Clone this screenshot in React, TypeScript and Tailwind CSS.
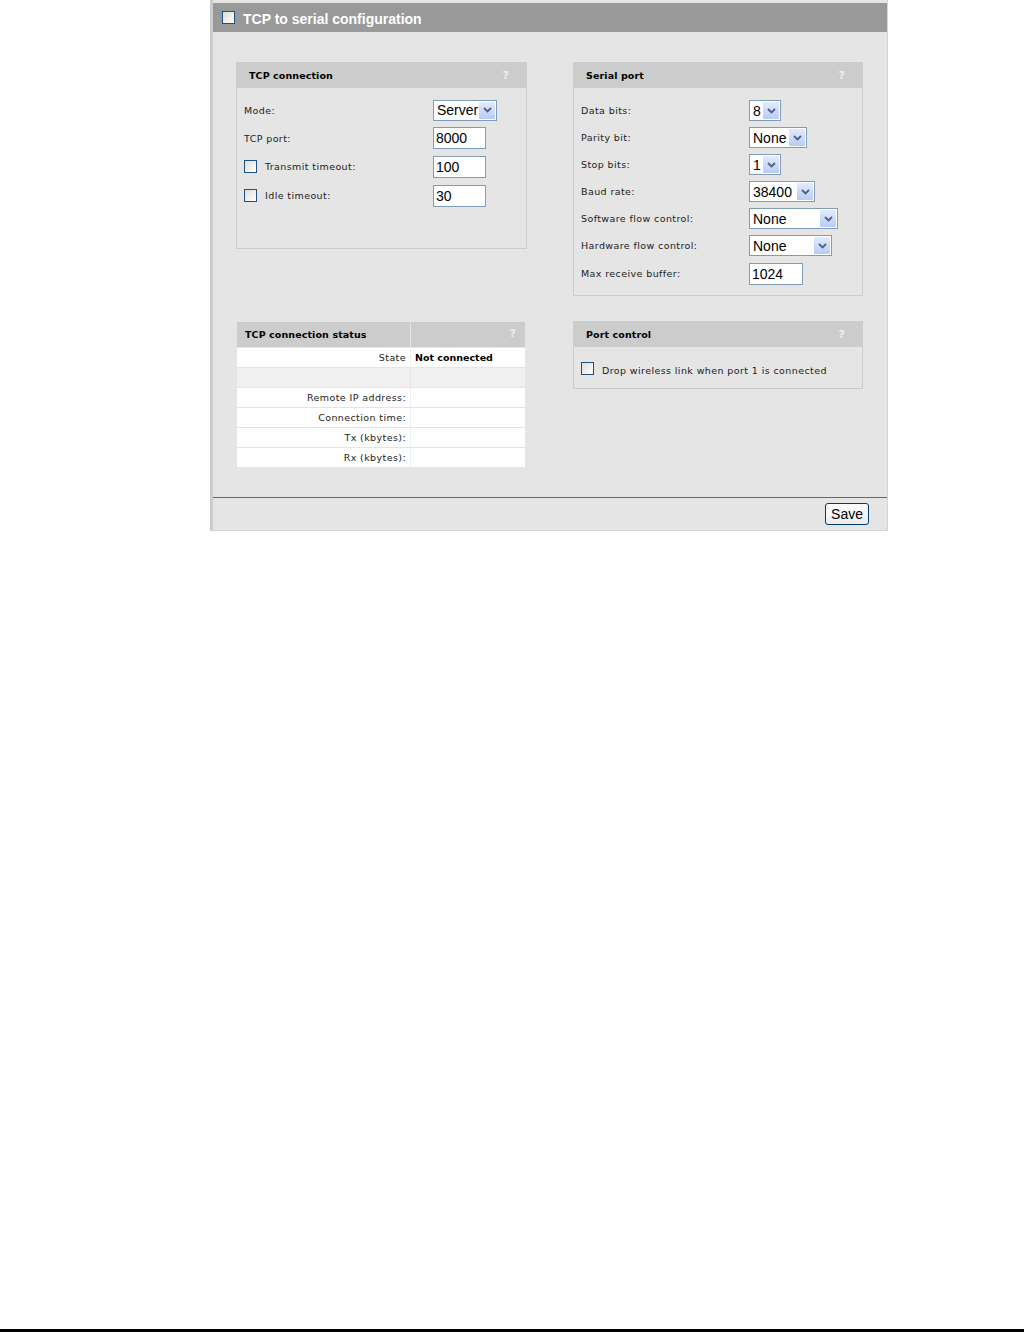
import React from "react";

const LBL = "font-['DejaVu_Sans',sans-serif] text-[9.5px] tracking-[0.4px] text-[#222] pt-[2px]";
const HDR = "font-['DejaVu_Sans',sans-serif] text-[9.5px] tracking-[0.1px] font-bold text-black";

function Chevron() {
  return (
    <svg width="9" height="6" viewBox="0 0 9 6">
      <path d="M1 1 L4.5 4.5 L8 1" fill="none" stroke="#4d6185" strokeWidth="1.8" />
    </svg>
  );
}

function Select({ value, w }: { value: string; w: string }) {
  return (
    <div className={`flex h-[21px] items-center border border-[#7f9db9] bg-white ${w}`}>
      <span className="flex-1 pl-[3px] font-['Liberation_Sans',sans-serif] text-[14px] leading-none text-black">{value}</span>
      <span className="mr-[1px] flex h-[17px] w-[16px] items-center justify-center rounded-[1px] bg-gradient-to-b from-[#e3ebfd] to-[#b9cbf5]">
        <Chevron />
      </span>
    </div>
  );
}

function Input({ value, w }: { value: string; w: string }) {
  return (
    <div className={`flex h-[22px] items-center border border-[#7f9db9] bg-white pl-[2px] font-['Liberation_Sans',sans-serif] text-[14px] leading-none text-black ${w}`}>
      {value}
    </div>
  );
}

function Check() {
  return <span className="inline-block h-[13px] w-[13px] shrink-0 border border-[#1c5180] bg-gradient-to-br from-[#dcdcd7] to-white" />;
}

function BoxHeader({ title }: { title: string }) {
  return (
    <div className="flex h-[26px] items-center justify-between bg-[#cccccc] pl-[12px] pr-[17px] pt-[2px]">
      <span className={HDR}>{title}</span>
      <span className="font-['DejaVu_Sans',sans-serif] text-[11px] font-bold text-[#eeeeee]">?</span>
    </div>
  );
}

function Row({ label, control, check, h, ctlLeft }: { label: string; control: React.ReactNode; check?: boolean; h: string; ctlLeft: string }) {
  return (
    <div className={`flex items-center ${h}`}>
      <div className={`flex items-center ${ctlLeft}`}>
        {check && <Check />}
        <span className={`${LBL} ${check ? "ml-[8px]" : ""}`}>{label}</span>
      </div>
      {control}
    </div>
  );
}

export default function App() {
  return (
    <div className="flex min-h-[1332px] flex-col bg-white">
      <div className="ml-[210px] flex w-[678px] flex-col border-l-[3px] border-r border-b border-l-[#cccccc] border-r-[#d4d4d4] border-b-[#d4d4d4] bg-[#e5e5e5] pt-[3px]">
        <div className="flex h-[29px] items-center gap-[8px] bg-[#999999] pl-[9px]">
          <Check />
          <span className="pt-[3px] font-['Liberation_Sans',sans-serif] text-[14px] font-bold text-white">TCP to serial configuration</span>
        </div>

        <div className="grid grid-cols-[291px_290px] gap-x-[46px] pl-[23px] pt-[30px] pb-[30px]">
          {/* TCP connection */}
          <div className="self-start border border-[#cccccc] border-t-0">
            <BoxHeader title="TCP connection" />
            <div className="px-[7px] pt-[8px] pb-[38px]">
              <Row h="h-[28px]" ctlLeft="w-[189px]" label="Mode:" control={<Select value="Server" w="w-[64px]" />} />
              <Row h="h-[28px]" ctlLeft="w-[189px]" label="TCP port:" control={<Input value="8000" w="w-[53px]" />} />
              <Row h="h-[29px]" ctlLeft="w-[189px]" check label="Transmit timeout:" control={<Input value="100" w="w-[53px]" />} />
              <Row h="h-[29px]" ctlLeft="w-[189px]" check label="Idle timeout:" control={<Input value="30" w="w-[53px]" />} />
            </div>
          </div>

          {/* Serial port */}
          <div className="self-start border border-[#cccccc] border-t-0">
            <BoxHeader title="Serial port" />
            <div className="px-[7px] pt-[9px] pb-[7px]">
              <Row h="h-[27px]" ctlLeft="w-[168px]" label="Data bits:" control={<Select value="8" w="w-[32px]" />} />
              <Row h="h-[27px]" ctlLeft="w-[168px]" label="Parity bit:" control={<Select value="None" w="w-[58px]" />} />
              <Row h="h-[27px]" ctlLeft="w-[168px]" label="Stop bits:" control={<Select value="1" w="w-[32px]" />} />
              <Row h="h-[27px]" ctlLeft="w-[168px]" label="Baud rate:" control={<Select value="38400" w="w-[66px]" />} />
              <Row h="h-[27px]" ctlLeft="w-[168px]" label="Software flow control:" control={<Select value="None" w="w-[89px]" />} />
              <Row h="h-[27px]" ctlLeft="w-[168px]" label="Hardware flow control:" control={<Select value="None" w="w-[83px]" />} />
              <Row h="h-[29px]" ctlLeft="w-[168px]" label="Max receive buffer:" control={<Input value="1024" w="w-[54px]" />} />
            </div>
          </div>

          {/* TCP connection status */}
          <div className="mt-[26px] ml-[1px] w-[288px] self-start">
            <div className="grid grid-cols-[173px_1fr] gap-x-[1px] bg-[#e5e5e5]">
              <div className={`flex h-[25px] items-center bg-[#cccccc] pl-[8px] pt-[2px] ${HDR}`}>TCP connection status</div>
              <div className="flex h-[25px] items-center justify-end bg-[#cccccc] pr-[9px] font-['DejaVu_Sans',sans-serif] text-[11px] font-bold text-[#eeeeee]">?</div>
            </div>
            <div className="flex flex-col gap-y-[1px] bg-[#e5e5e5] pt-[1px]">
              {[
                ["State", "Not connected", "bg-white"],
                ["", "", "bg-[#f0f0f0]"],
                ["Remote IP address:", "", "bg-white"],
                ["Connection time:", "", "bg-white"],
                ["Tx (kbytes):", "", "bg-white"],
                ["Rx (kbytes):", "", "bg-white"],
              ].map(([l, v, bg], i) => (
                <div key={i} className={`grid h-[19px] grid-cols-[173px_1fr] gap-x-[1px] ${bg === "bg-white" ? "bg-[#eeeeee]" : ""}`}>
                  <div className={`flex items-center justify-end pr-[4px] ${bg} ${LBL}`}>{l}</div>
                  <div className={`flex items-center pl-[4px] pt-[2px] ${bg} font-['DejaVu_Sans',sans-serif] text-[9.5px] font-bold text-black`}>{v}</div>
                </div>
              ))}
            </div>
          </div>

          {/* Port control */}
          <div className="mt-[25px] self-start border border-[#cccccc] border-t-0">
            <BoxHeader title="Port control" />
            <div className="flex h-[41px] items-start px-[7px] pt-[15px]">
              <Check />
              <span className={`${LBL} ml-[8px] leading-[13px]`}>Drop wireless link when port 1 is connected</span>
            </div>
          </div>
        </div>

        <div className="flex h-[33px] items-center justify-end border-t border-t-[#666666] pr-[18px]">
          <button className="h-[22px] rounded-[3px] border border-[#003c74] bg-gradient-to-b from-white to-[#ececec] px-[5px] font-['Liberation_Sans',sans-serif] text-[14px] leading-none text-black">
            Save
          </button>
        </div>
      </div>
      <div className="mt-auto h-[3px] bg-black" />
    </div>
  );
}
